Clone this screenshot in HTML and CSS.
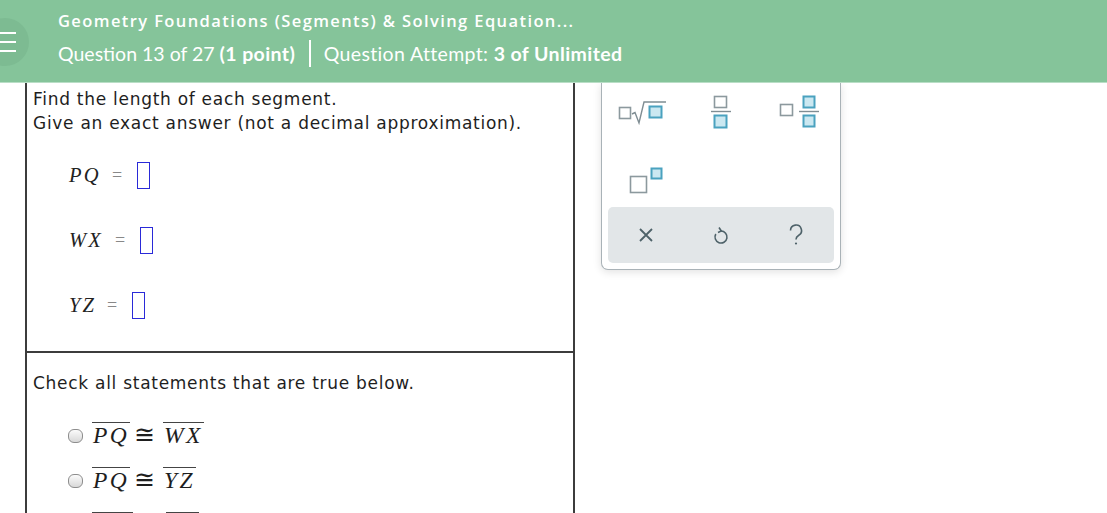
FILE: index.html
```html
<!DOCTYPE html>
<html lang="en">
<head>
<meta charset="utf-8">
<title>Geometry Foundations</title>
<link rel="stylesheet" href="styles.css">
</head>
<body>
<header class="topbar">
  <div class="menu-btn">
    <span class="bar"></span><span class="bar"></span><span class="bar"></span>
  </div>
  <div class="titles">
    <div class="course">Geometry Foundations (Segments) &amp; Solving Equation...</div>
    <div class="meta">
      <span>Question 13 of 27 <b>(1 point)</b></span>
      <span class="sep"></span>
      <span>Question Attempt: <b>3 of Unlimited</b></span>
    </div>
  </div>
</header>

<main class="main">
  <section class="question">
    <div class="cell cell-top">
      <p class="prompt">Find the length of each segment.<br>Give an exact answer (not a decimal approximation).</p>
      <div class="eqs">
        <div class="eq-row"><span class="var">PQ</span><span class="eqsign">=</span><span class="ans"></span></div>
        <div class="eq-row"><span class="var">WX</span><span class="eqsign">=</span><span class="ans"></span></div>
        <div class="eq-row"><span class="var">YZ</span><span class="eqsign">=</span><span class="ans"></span></div>
      </div>
    </div>
    <div class="cell cell-bottom">
      <p class="prompt">Check all statements that are true below.</p>
      <div class="checks">
        <label class="check-row"><span class="box"></span><span class="seg">PQ</span><span class="cong">≅</span><span class="seg">WX</span></label>
        <label class="check-row"><span class="box"></span><span class="seg">PQ</span><span class="cong">≅</span><span class="seg">YZ</span></label>
        <label class="check-row"><span class="box"></span><span class="seg">WX</span><span class="cong">≅</span><span class="seg">YZ</span></label>
      </div>
    </div>
  </section>

  <aside class="palette">
    <div class="keys">
      <button class="key" aria-label="square root">
        <svg width="50" height="30" viewBox="0 0 50 30">
          <rect x="2.5" y="10.5" width="11" height="11" fill="#fff" stroke="#8c999e" stroke-width="1.6"/>
          <path d="M15 17 L18 15.5 L22 26 L27 5 H49" fill="none" stroke="#7f8d93" stroke-width="1.4"/>
          <rect x="32.5" y="9.5" width="12" height="11" fill="#cbe8f1" stroke="#4aa2bf" stroke-width="2"/>
        </svg>
      </button>
      <button class="key" aria-label="fraction">
        <svg width="22" height="34" viewBox="0 0 22 34">
          <rect x="4.5" y="1.5" width="12" height="11" fill="#fff" stroke="#8c999e" stroke-width="1.6"/>
          <line x1="1" y1="16.5" x2="21" y2="16.5" stroke="#7f8d93" stroke-width="1.4"/>
          <rect x="4.5" y="20.5" width="12" height="12" fill="#cbe8f1" stroke="#4aa2bf" stroke-width="2"/>
        </svg>
      </button>
      <button class="key" aria-label="mixed number">
        <svg width="42" height="34" viewBox="0 0 42 34">
          <rect x="1.5" y="9.5" width="12" height="11" fill="#fff" stroke="#8c999e" stroke-width="1.6"/>
          <rect x="24.5" y="1.5" width="11" height="11" fill="#cbe8f1" stroke="#4aa2bf" stroke-width="2"/>
          <line x1="20" y1="16.5" x2="40" y2="16.5" stroke="#7f8d93" stroke-width="1.4"/>
          <rect x="24.5" y="20.5" width="11" height="11" fill="#cbe8f1" stroke="#4aa2bf" stroke-width="2"/>
        </svg>
      </button>
      <button class="key" aria-label="exponent">
        <svg width="38" height="28" viewBox="0 0 38 28">
          <rect x="2.5" y="9.5" width="16" height="16" fill="#fff" stroke="#8c999e" stroke-width="1.6"/>
          <rect x="23.5" y="1.5" width="10" height="10" fill="#cbe8f1" stroke="#4aa2bf" stroke-width="2"/>
        </svg>
      </button>
    </div>
    <div class="actions">
      <button class="act" aria-label="clear">
        <svg width="18" height="18" viewBox="0 0 18 18"><path d="M3 3 L15 15 M15 3 L3 15" stroke="#4e6269" stroke-width="1.8" fill="none"/></svg>
      </button>
      <button class="act" aria-label="undo">
        <svg width="18" height="20" viewBox="0 0 18 20"><path d="M9 6 A6 6 0 1 1 3.8 9" stroke="#4e6269" stroke-width="1.6" fill="none"/><path d="M7 2.5 L9.3 6 L6 7.5" stroke="#4e6269" stroke-width="1.6" fill="none"/></svg>
      </button>
      <button class="act" aria-label="help">
        <svg width="16" height="22" viewBox="0 0 16 22"><path d="M2.5 6.5 A5.5 5.5 0 1 1 10.5 11.5 C8.5 12.6 8 13.5 8 15.5" stroke="#4e6269" stroke-width="1.6" fill="none"/><circle cx="8" cy="19.5" r="1.1" fill="#4e6269"/></svg>
      </button>
    </div>
  </aside>
</main>
</body>
</html>
```

FILE: styles.css
```css
* { box-sizing: border-box; }

html, body {
  margin: 0;
  padding: 0;
  background: #ffffff;
  overflow: hidden;
}

body {
  width: 1107px;
  height: 513px;
}

.topbar {
  height: 83px;
  background: #85c49a;
  border-bottom: 1px solid #b9dec6;
  display: flex;
  align-items: flex-start;
  position: relative;
  overflow: hidden;
}

.menu-btn {
  position: absolute;
  left: -19px;
  top: 18px;
  width: 48px;
  height: 48px;
  border-radius: 50%;
  background: #7dbb92;
  display: flex;
  flex-direction: column;
  align-items: flex-end;
  justify-content: center;
  gap: 7px;
  padding-right: 13px;
}

.menu-btn .bar {
  display: block;
  width: 19px;
  height: 2px;
  background: #ffffff;
}

.titles {
  margin-left: 58px;
  padding-top: 10px;
  color: #ffffff;
  font-family: "Open Sans", "Liberation Sans", sans-serif;
}

.course {
  font-size: 16.5px;
  font-weight: 600;
  letter-spacing: 1.4px;
  line-height: 22px;
}

.meta {
  margin-top: 8px;
  display: flex;
  align-items: center;
  font-family: Lato, "Open Sans", sans-serif;
  font-size: 19.5px;
  line-height: 26px;
  font-weight: 400;
}

.meta b { font-weight: 700; letter-spacing: 0.4px; }
.meta span:last-child { letter-spacing: 0.35px; }

.meta .sep {
  width: 1.5px;
  height: 27px;
  background: #ffffff;
  margin: 0 13px 0 14px;
}

.main {
  display: flex;
  align-items: flex-start;
  padding-left: 25px;
}

.question {
  width: 550px;
  border-left: 2px solid #3c3c3c;
  border-right: 2px solid #3c3c3c;
  font-family: "DejaVu Sans", Verdana, sans-serif;
  color: #1e1e1e;
}

.cell { padding-left: 6px; }

.cell-top {
  padding-top: 4px;
  padding-bottom: 13px;
  border-bottom: 2px solid #3c3c3c;
}

.cell-bottom {
  padding-top: 18px;
}

.prompt {
  margin: 0;
  font-size: 17px;
  line-height: 24px;
  letter-spacing: 0.72px;
}

.eqs {
  margin-top: 8px;
  padding-left: 36px;
}

.eq-row {
  height: 65px;
  display: flex;
  align-items: center;
}

.var {
  font-family: "Liberation Serif", "Times New Roman", serif;
  font-style: italic;
  font-size: 20.5px;
  letter-spacing: 2.2px;
  color: #222;
  width: 43px;
}

.eq-row:nth-child(2) .var { width: 46px; }
.eq-row:nth-child(3) .var { width: 38px; }

.eqsign {
  font-family: "Liberation Serif", serif;
  font-size: 18px;
  color: #888;
  width: 25px;
}

.ans {
  display: block;
  width: 13px;
  height: 27px;
  border: 1.6px solid #2a2ad8;
}

.checks {
  margin-top: 17px;
  padding-left: 35px;
}

.check-row {
  height: 45px;
  display: flex;
  align-items: center;
  font-family: "Liberation Serif", "Times New Roman", serif;
  font-size: 23.5px;
  color: #1e1e1e;
}

.check-row .box {
  width: 15px;
  height: 14px;
  border-radius: 6px;
  border: 1px solid #8d8d8d;
  background: linear-gradient(#fbfbfb, #d8d8d8);
  margin-right: 9px;
  margin-top: 2px;
}

.seg {
  font-style: italic;
  letter-spacing: 2.4px;
  border-top: 1.5px solid #444;
  line-height: 24px;
  padding: 0 1px;
}

.cong {
  font-family: "DejaVu Serif", "DejaVu Sans", serif;
  margin: 0 8px 0 4px;
  font-size: 25px;
  line-height: 24px;
}

.palette {
  margin-left: 26px;
  width: 240px;
  height: 187px;
  border: 1.5px solid #a9b2b7;
  border-top: none;
  border-radius: 0 0 7px 7px;
  box-shadow: 0 2px 8px rgba(0,0,0,0.12);
  background: #fff;
  padding: 0 6px 6px 6px;
  display: flex;
  flex-direction: column;
  justify-content: flex-end;
}

.keys {
  display: grid;
  grid-template-columns: repeat(3, 1fr);
  grid-auto-rows: 62px;
  align-items: center;
  justify-items: center;
  position: relative;
  top: -2px;
}

.key {
  border: none;
  background: transparent;
  padding: 0;
  display: flex;
}

.key:nth-child(1) { margin-left: -8px; }
.key:nth-child(3) { margin-left: 8px; }
.key:nth-child(4) { margin-left: 2px; margin-top: 14px; }

.actions {
  height: 57px;
  background: #e2e6e8;
  border-radius: 5px;
  display: grid;
  grid-template-columns: repeat(3, 1fr);
  align-items: center;
  justify-items: center;
}

.act {
  border: none;
  background: transparent;
  padding: 0;
  display: flex;
}
```
